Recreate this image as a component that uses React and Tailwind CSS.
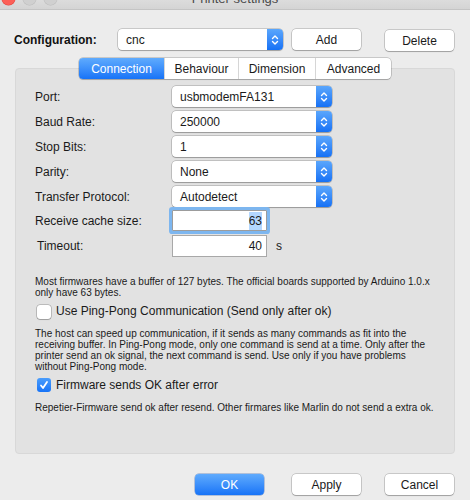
import React from 'react';

const font = { fontFamily: '"Liberation Sans", Arial, sans-serif' };

const Stepper = () => (
    <div className="flex h-full w-[16px] items-center justify-center rounded-r-[4px] bg-gradient-to-b from-[#5aa6fc] to-[#1571f5]">
        <svg width="8" height="12" viewBox="0 0 8 12" fill="none" stroke="white" strokeWidth="1.4" strokeLinecap="round" strokeLinejoin="round">
            <path d="M1.5 4.5 L4 2 L6.5 4.5" />
            <path d="M1.5 7.5 L4 10 L6.5 7.5" />
        </svg>
    </div>
);

const Select = ({ value, width = 'w-[160px]' }) => (
    <div className={`flex h-[21px] ${width} items-stretch rounded-[4px] bg-white shadow-[0_0_0_0.5px_rgba(0,0,0,0.3),0_1px_1px_rgba(0,0,0,0.2)]`}>
        <div className="flex flex-1 items-center pl-[8px] text-[12px] text-[#1a1a1a]">{value}</div>
        <Stepper />
    </div>
);

const Button = ({ children, primary }) => (
    <button
        className={
            primary
                ? 'flex h-[21px] w-[69px] items-center justify-center rounded-[4px] bg-gradient-to-b from-[#5fabfd] to-[#1673f7] text-[12px] text-white shadow-[0_0_0_0.5px_rgba(0,60,160,0.5)]'
                : 'flex h-[21px] w-[69px] items-center justify-center rounded-[4px] bg-white text-[12px] text-[#1a1a1a] shadow-[0_0_0_0.5px_rgba(0,0,0,0.3),0_1px_1px_rgba(0,0,0,0.2)]'
        }
    >
        {children}
    </button>
);

const Row = ({ label, children, labelClass = '' }) => (
    <div className="flex items-center">
        <div className={`w-[137px] text-[12px] text-[#1a1a1a] ${labelClass}`}>{label}</div>
        {children}
    </div>
);

const Checkbox = ({ checked, label }) => (
    <div className="flex items-center pl-[2px]">
        {checked ? (
            <div className="flex h-[14px] w-[14px] items-center justify-center rounded-[3px] bg-gradient-to-b from-[#4a9dfc] to-[#1673f7]">
                <svg width="10" height="10" viewBox="0 0 10 10" fill="none" stroke="white" strokeWidth="1.8" strokeLinecap="round" strokeLinejoin="round">
                    <path d="M2 5.5 L4 8 L8 2" />
                </svg>
            </div>
        ) : (
            <div className="h-[14px] w-[14px] rounded-[3px] bg-white shadow-[0_0_0_0.5px_rgba(0,0,0,0.35),0_1px_1px_rgba(0,0,0,0.15)]" />
        )}
        <span className="ml-[5px] text-[12px] leading-[19.5px] text-[#1a1a1a]">{label}</span>
    </div>
);

const App = () => {
    const tabs = [
        { name: 'Connection', w: 'w-[85px]' },
        { name: 'Behaviour', w: 'w-[74px]' },
        { name: 'Dimension', w: 'w-[77px]' },
        { name: 'Advanced', w: 'w-[76px]' },
    ];

    return (
        <div className="h-[500px] w-[470px] overflow-hidden bg-[#ececec]" style={font}>
            {/* title bar, mostly cut off */}
            <div className="relative h-[10px] overflow-hidden border-b border-[#c4c4c4] bg-gradient-to-b from-[#dcdcdc] to-[#d4d4d4]">
                <div className="absolute left-[2px] top-[-8px] flex gap-[8px]">
                    <div className="h-[13px] w-[13px] rounded-full bg-[#fc5f57] shadow-[0_0_0_0.5px_#e0443e]" />
                    <div className="h-[13px] w-[13px] rounded-full bg-[#d0d0d0] shadow-[0_0_0_0.5px_#bdbdbd]" />
                    <div className="h-[13px] w-[13px] rounded-full bg-[#d0d0d0] shadow-[0_0_0_0.5px_#bdbdbd]" />
                </div>
                <div className="absolute left-0 right-0 top-[-11px] text-center text-[13px] text-[#4a4a4a]">Printer settings</div>
            </div>

            {/* configuration */}
            <div className="mt-[18px] flex items-center pl-[14px]">
                <div className="w-[104px] text-[12px] font-bold text-[#111]">Configuration:</div>
                <Select value="cnc" width="w-[165px]" />
                <div className="ml-[9px]">
                    <Button>Add</Button>
                </div>
                <div className="ml-[24px] mt-[2px]">
                    <Button>Delete</Button>
                </div>
            </div>

            {/* tabs */}
            <div className="relative z-10 mt-[7px] flex pl-[79px]">
                <div className="flex h-[21px] overflow-hidden rounded-[4px] bg-white shadow-[0_0_0_0.5px_rgba(0,0,0,0.3),0_1px_1px_rgba(0,0,0,0.15)]">
                    {tabs.map((t, i) => (
                        <div
                            key={t.name}
                            className={
                                i === 0
                                    ? `flex ${t.w} items-center justify-center bg-gradient-to-b from-[#5fabfd] to-[#1673f7] text-[12px] text-white`
                                    : `flex ${t.w} items-center justify-center border-l border-[#d6d6d6] text-[12px] text-[#1a1a1a]`
                            }
                        >
                            {t.name}
                        </div>
                    ))}
                </div>
            </div>

            {/* panel */}
            <div className="mx-[15px] mt-[-11px] h-[386px] rounded-[4px] border border-[#d8d8d8] bg-[#e2e2e2] pl-[19px] pt-[17px]">
                <div className="flex flex-col gap-[4px]">
                    <Row label="Port:"><Select value="usbmodemFA131" /></Row>
                    <Row label="Baud Rate:"><Select value="250000" /></Row>
                    <Row label="Stop Bits:"><Select value="1" /></Row>
                    <Row label="Parity:"><Select value="None" /></Row>
                    <Row label="Transfer Protocol:"><Select value="Autodetect" /></Row>
                </div>

                <div className="mt-[3px]">
                    <Row label="Receive cache size:">
                        <div className="flex h-[21px] w-[95px] items-center justify-end rounded-[1px] border border-[#9c9c9c] bg-white pr-[4px] text-[12px] text-[#1a1a1a] shadow-[0_0_0_3px_#7db6ef]">
                            <span className="bg-[#b3d7ff]">63</span>
                        </div>
                    </Row>
                </div>

                <div className="mt-[4px]">
                    <Row label="Timeout:" labelClass="pl-[2px]">
                        <div className="flex h-[22px] w-[95px] items-center justify-end border border-[#a8a8a8] bg-white pr-[4px] text-[12px] text-[#1a1a1a]">
                            40
                        </div>
                        <span className="ml-[9px] text-[12px] text-[#1a1a1a]">s</span>
                    </Row>
                </div>

                <p className="mt-[19px] whitespace-nowrap text-[10px] leading-[11px] text-[#1a1a1a]">
                    Most firmwares have a buffer of 127 bytes. The official boards supported by Arduino 1.0.x
                    <br />
                    only have 63 bytes.
                </p>

                <div className="mt-[4px]">
                    <Checkbox label="Use Ping-Pong Communication (Send only after ok)" />
                </div>

                <p className="mt-[6px] whitespace-nowrap text-[10px] leading-[11px] text-[#1a1a1a]">
                    The host can speed up communication, if it sends as many commands as fit into the
                    <br />
                    receiving buffer. In Ping-Pong mode, only one command is send at a time. Only after the
                    <br />
                    printer send an ok signal, the next command is send. Use only if you have problems
                    <br />
                    without Ping-Pong mode.
                </p>

                <div className="mt-[4px]">
                    <Checkbox checked label="Firmware sends OK after error" />
                </div>

                <p className="mt-[7px] whitespace-nowrap text-[10px] leading-[11px] text-[#1a1a1a]">
                    Repetier-Firmware send ok after resend. Other firmares like Marlin do not send a extra ok.
                </p>
            </div>

            {/* bottom buttons */}
            <div className="mt-[20px] flex pl-[195px]">
                <Button primary>OK</Button>
                <div className="ml-[28px]">
                    <Button>Apply</Button>
                </div>
                <div className="ml-[24px]">
                    <Button>Cancel</Button>
                </div>
            </div>
        </div>
    );
};

export default App;
